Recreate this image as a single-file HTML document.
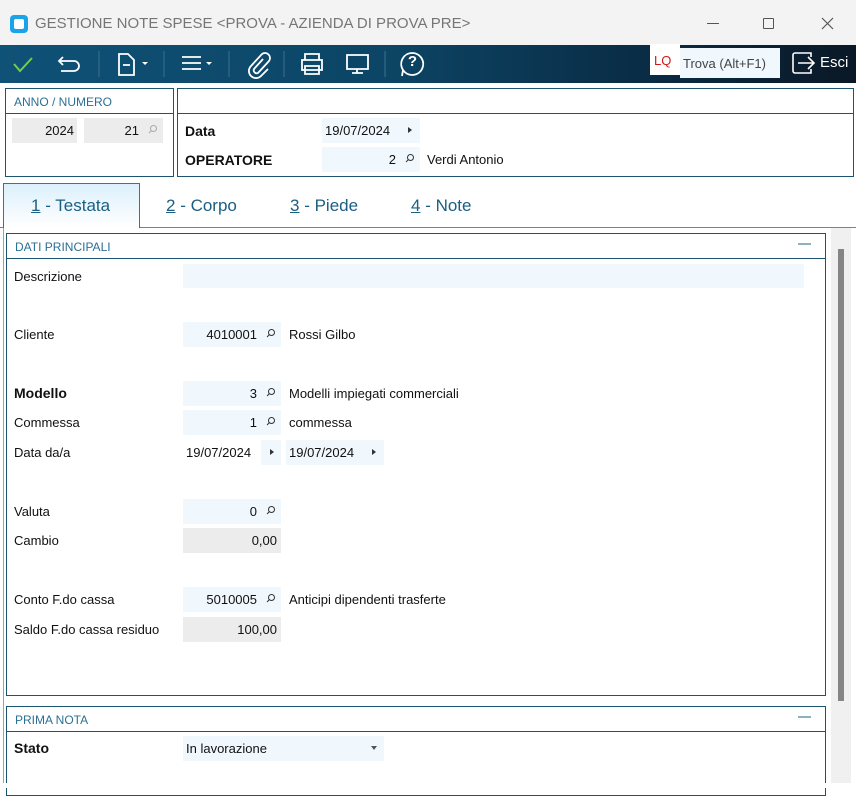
<!DOCTYPE html>
<html><head><meta charset="utf-8"><style>
*{box-sizing:border-box;margin:0;padding:0}
body{width:856px;height:788px;overflow:hidden;background:#fff;font-family:"Liberation Sans",sans-serif;font-size:13px;color:#111;position:relative}
.a{position:absolute}
.f{position:absolute;background:#f0f7fd;height:25px;line-height:25px;text-align:right;padding-right:24px}
.g{background:#ececec}
.mag{position:absolute;right:6px;top:7px;width:9px;height:9px}
.lbl{position:absolute;left:14px;line-height:25px}
.t{position:absolute;left:289px;line-height:25px}
.box{position:absolute;border:1px solid #1b5470}
.hd{color:#2a6f96;font-size:12px}
.arr{position:absolute;width:0;height:0;border-left:4px solid #333;border-top:3.5px solid transparent;border-bottom:3.5px solid transparent}
.tab{position:absolute;top:196px;font-size:17px;color:#1a5f82}
.tab u{text-decoration:underline}
</style></head><body>
<div class="a" style="left:0;top:0;width:856px;height:45px;background:#f3f3f3"></div>
<div class="a" style="left:10px;top:15px;width:18px;height:18px;border-radius:4px;background:#1aa3e8"><div class="a" style="left:4px;top:4px;width:10px;height:10px;border-radius:2px;background:#fff"></div></div>
<div class="a" style="left:35px;top:15px;font-size:15px;color:#767676">GESTIONE NOTE SPESE &lt;PROVA - AZIENDA DI PROVA PRE&gt;</div>
<div class="a" style="left:707px;top:23px;width:12px;height:1px;background:#555"></div>
<div class="a" style="left:763px;top:18px;width:11px;height:11px;border:1px solid #555;border-radius:1px"></div>
<svg class="a" style="left:821px;top:17px" width="13" height="13"><path d="M1 1L12 12M12 1L1 12" stroke="#555" stroke-width="1.2"/></svg>
<div class="a" style="left:0;top:45px;width:856px;height:38px;background:linear-gradient(90deg,#0f5277 0%,#0c4565 45%,#0a2c45 75%,#0a1826 100%)"></div>
<svg class="a" style="left:0;top:45px" width="440" height="38" fill="none" stroke="#fff" stroke-width="1.8">
<path d="M14 19l6 7 12-13" stroke="#6dd04a" stroke-width="2"/>
<path d="M63 12l-4 4 4 4M59 16h15a5 5 0 0 1 0 10h-13"/>
<line x1="99" y1="6" x2="99" y2="32" stroke="#3b6f8e" stroke-width="1"/>
<path d="M119 9h9l6 6v15h-15z M123 20h7"/>
<path d="M142 17h6l-3 3z" fill="#fff" stroke="none"/>
<line x1="164" y1="6" x2="164" y2="32" stroke="#3b6f8e" stroke-width="1"/>
<path d="M182 12h19M182 18h19M182 24h19"/>
<path d="M206 17h6l-3 3z" fill="#fff" stroke="none"/>
<line x1="229" y1="6" x2="229" y2="32" stroke="#3b6f8e" stroke-width="1"/>
<path d="M263 14l-9 10a3 3 0 0 0 4 4l11-12a5 5 0 0 0-7-7l-11 12a7 7 0 0 0 10 10l7-7"/>
<line x1="284" y1="6" x2="284" y2="32" stroke="#3b6f8e" stroke-width="1"/>
<path d="M305 15v-6h14v6M302 15h20v10h-20zM305 21h14v8h-14zM308 25h8"/>
<path d="M347 10h21v14h-21zM357 24v4M352 28h11"/>
<line x1="385" y1="6" x2="385" y2="32" stroke="#3b6f8e" stroke-width="1"/>
<path d="M412 8a11 11 0 1 1-9 17l-1 6 1-6a11 11 0 0 1 9-17z"/>
</svg>
<div class="a" style="left:405px;top:53px;width:15px;color:#fff;font-size:15px;font-weight:bold;text-align:center">?</div>
<div class="a" style="left:650px;top:44px;width:30px;height:31px;background:#fff;color:#d01818;font-size:13px;padding:9px 0 0 4px">LQ</div>
<div class="a" style="left:680px;top:48px;width:100px;height:30px;background:#f0f7fd;color:#444;font-size:13px;padding:8px 0 0 3px">Trova (Alt+F1)</div>
<svg class="a" style="left:792px;top:51px" width="26" height="24" fill="none" stroke="#fff" stroke-width="1.6"><path d="M10 2H3a2 2 0 0 0-2 2v16a2 2 0 0 0 2 2h7M6 12h15M16 6l6 6-6 6"/><path d="M10 2h9v4M10 22h9v-4"/></svg>
<div class="a" style="left:820px;top:54px;color:#fff;font-size:15px">Esci</div>

<div class="box" style="left:5px;top:88px;width:169px;height:89px"></div>
<div class="a" style="left:5px;top:113px;width:169px;height:1px;background:#1b5470"></div>
<div class="a hd" style="left:14px;top:95px">ANNO / NUMERO</div>
<div class="f g" style="left:12px;top:118px;width:65px;padding-right:3px">2024</div>
<div class="f g" style="left:84px;top:118px;width:79px">21<svg class="mag" viewBox="0 0 9 9"><circle cx="5.5" cy="3.5" r="3" fill="none" stroke="#aaa"/><path d="M3.5 5.5L1 8" stroke="#aaa"/></svg></div>
<div class="box" style="left:177px;top:88px;width:677px;height:89px"></div>
<div class="a" style="left:177px;top:113px;width:677px;height:1px;background:#1b5470"></div>
<div class="a" style="left:185px;top:123px;font-weight:bold;font-size:14px">Data</div>
<div class="a" style="left:322px;top:118px;width:98px;height:25px;background:#f0f7fd;line-height:25px;padding-left:3px">19/07/2024</div><div class="arr" style="left:408px;top:127px"></div>
<div class="a" style="left:185px;top:152px;font-weight:bold;font-size:14px">OPERATORE</div>
<div class="f" style="left:322px;top:147px;width:98px">2<svg class="mag" viewBox="0 0 9 9"><circle cx="5.5" cy="3.5" r="3" fill="none" stroke="#333"/><path d="M3.5 5.5L1 8" stroke="#333"/></svg></div>
<div class="a" style="left:427px;top:147px;line-height:25px">Verdi Antonio</div>

<div class="a" style="left:0;top:227px;width:856px;height:1px;background:#6a8797"></div>
<div class="a" style="left:3px;top:183px;width:137px;height:45px;border:1px solid #3c7392;border-bottom:none;background:linear-gradient(#dcf0fc,#fff)"></div>
<div class="tab" style="left:31px"><u>1</u> - Testata</div>
<div class="tab" style="left:166px"><u>2</u> - Corpo</div>
<div class="tab" style="left:290px"><u>3</u> - Piede</div>
<div class="tab" style="left:411px"><u>4</u> - Note</div>
<div class="a" style="left:3px;top:228px;width:1px;height:560px;background:#8aa"></div>

<div class="a" style="left:831px;top:228px;width:20px;height:555px;background:#f0f0f0"></div>
<div class="a" style="left:838px;top:249px;width:6px;height:452px;background:#858585"></div>

<div class="box" style="left:6px;top:233px;width:820px;height:463px"></div>
<div class="a" style="left:6px;top:258px;width:820px;height:1px;background:#1b5470"></div>
<div class="a hd" style="left:15px;top:240px">DATI PRINCIPALI</div>
<div class="a" style="left:798px;top:243px;width:13px;height:2px;background:#8fb0c0"></div>
<div class="lbl" style="top:264px">Descrizione</div>
<div class="a" style="left:183px;top:264px;width:621px;height:24px;background:#f0f7fd"></div>

<div class="lbl" style="top:322px">Cliente</div>
<div class="f" style="left:183px;top:322px;width:98px">4010001<svg class="mag" viewBox="0 0 9 9"><circle cx="5.5" cy="3.5" r="3" fill="none" stroke="#333"/><path d="M3.5 5.5L1 8" stroke="#333"/></svg></div>
<div class="t" style="top:322px">Rossi Gilbo</div>
<div class="lbl" style="top:381px;font-weight:bold;font-size:14px">Modello</div>
<div class="f" style="left:183px;top:381px;width:98px">3<svg class="mag" viewBox="0 0 9 9"><circle cx="5.5" cy="3.5" r="3" fill="none" stroke="#333"/><path d="M3.5 5.5L1 8" stroke="#333"/></svg></div>
<div class="t" style="top:381px">Modelli impiegati commerciali</div>
<div class="lbl" style="top:410px">Commessa</div>
<div class="f" style="left:183px;top:410px;width:98px">1<svg class="mag" viewBox="0 0 9 9"><circle cx="5.5" cy="3.5" r="3" fill="none" stroke="#333"/><path d="M3.5 5.5L1 8" stroke="#333"/></svg></div>
<div class="t" style="top:410px">commessa</div>
<div class="lbl" style="top:440px">Data da/a</div>
<div class="a" style="left:186px;top:440px;line-height:25px">19/07/2024</div>
<div class="a" style="left:261px;top:440px;width:20px;height:25px;background:#f0f7fd"></div><div class="arr" style="left:270px;top:449px"></div>
<div class="a" style="left:286px;top:440px;width:98px;height:25px;background:#f0f7fd;line-height:25px;padding-left:3px">19/07/2024</div><div class="arr" style="left:372px;top:449px"></div>
<div class="lbl" style="top:499px">Valuta</div>
<div class="f" style="left:183px;top:499px;width:98px">0<svg class="mag" viewBox="0 0 9 9"><circle cx="5.5" cy="3.5" r="3" fill="none" stroke="#333"/><path d="M3.5 5.5L1 8" stroke="#333"/></svg></div>
<div class="lbl" style="top:528px">Cambio</div>
<div class="f g" style="left:183px;top:528px;width:98px;padding-right:4px">0,00</div>
<div class="lbl" style="top:587px">Conto F.do cassa</div>
<div class="f" style="left:183px;top:587px;width:98px">5010005<svg class="mag" viewBox="0 0 9 9"><circle cx="5.5" cy="3.5" r="3" fill="none" stroke="#333"/><path d="M3.5 5.5L1 8" stroke="#333"/></svg></div>
<div class="t" style="top:587px">Anticipi dipendenti trasferte</div>
<div class="lbl" style="top:617px">Saldo F.do cassa residuo</div>
<div class="f g" style="left:183px;top:617px;width:98px;padding-right:4px">100,00</div>

<div class="box" style="left:6px;top:706px;width:820px;height:90px"></div>
<div class="a" style="left:6px;top:731px;width:820px;height:1px;background:#1b5470"></div>
<div class="a hd" style="left:15px;top:713px">PRIMA NOTA</div>
<div class="a" style="left:798px;top:716px;width:13px;height:2px;background:#8fb0c0"></div>
<div class="lbl" style="top:736px;font-weight:bold;font-size:14px">Stato</div>
<div class="a" style="left:183px;top:736px;width:201px;height:25px;background:#f0f7fd;line-height:25px;padding-left:3px">In lavorazione</div>
<div class="a" style="left:371px;top:746px;width:0;height:0;border-top:4px solid #555;border-left:3.5px solid transparent;border-right:3.5px solid transparent"></div>
<div class="a" style="left:0;top:783px;width:856px;height:5px;background:#fff"></div>
</body></html>
